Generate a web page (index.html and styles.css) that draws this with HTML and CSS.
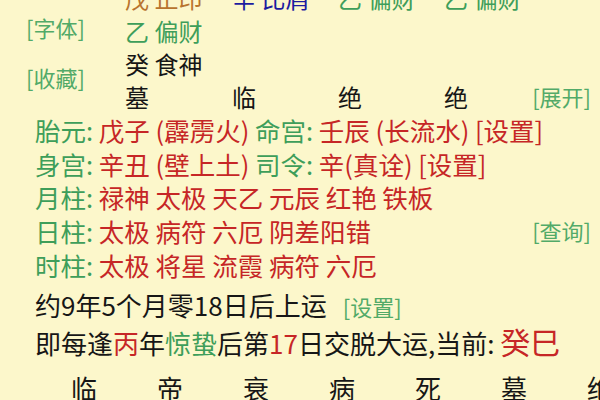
FILE: index.html
```html
<!DOCTYPE html>
<html lang="zh-CN">
<head>
<meta charset="UTF-8">
<meta name="viewport" content="width=device-width, initial-scale=1.0">
<title>排盘</title>
<link rel="stylesheet" href="styles.css">
</head>
<body>
<div class="page">
<div class="pillars">
<div class="cell first brown">戊 正印</div>
<div class="cell blue">辛 比肩</div>
<div class="cell green">乙 偏财</div>
<div class="cell green">乙 偏财</div>
<div class="side font-btn green">[字体]</div>
<div class="cell green">乙 偏财</div>
<div class="cell"></div>
<div class="cell"></div>
<div class="cell"></div>
<div class="side fav-btn green">[收藏]</div>
<div class="cell">癸 食神</div>
<div class="cell"></div>
<div class="cell"></div>
<div class="cell"></div>
<div class="cell">墓</div>
<div class="cell">临</div>
<div class="cell">绝</div>
<div class="cell last"><span>绝</span><span class="expand green">[展开]</span></div>
</div>
<div class="info">
<div class="line"><span class="green">胎元:</span> <span class="red">戊子 (霹雳火)</span> <span class="green">命宫:</span> <span class="red">壬辰 (长流水) [设置]</span></div>
<div class="line"><span class="green">身宫:</span> <span class="red">辛丑 (壁上土)</span> <span class="green">司令:</span> <span class="red">辛(真诠) [设置]</span></div>
<div class="line"><span class="green">月柱:</span> <span class="red">禄神 太极 天乙 元辰 红艳 铁板</span></div>
<div class="line split"><span><span class="green">日柱:</span> <span class="red">太极 病符 六厄 阴差阳错</span></span><span class="query green">[查询]</span></div>
<div class="line"><span class="green">时柱:</span> <span class="red">太极 将星 流霞 病符 六厄</span></div>
</div>
<div class="yun">
<div class="line">约9年5个月零18日后上运<span class="small green">[设置]</span></div>
<div class="line">即每逢<span class="red">丙</span>年<span class="green">惊蛰</span>后第<span class="red">17</span>日交脱大运,当前: <span class="big red">癸巳</span></div>
</div>
<div class="stages">
<span>临</span><span>帝</span><span>衰</span><span>病</span><span>死</span><span>墓</span><span>绝</span>
</div>
</div>
</body>
</html>
```

FILE: styles.css
```css
body {
    margin: 0;
    padding: 0;
    background-color: #fcf7cb;
    font-family: "Noto Sans CJK SC", "Noto Sans", sans-serif;
    color: #161616;
    overflow: hidden;
}
.page {
    width: 600px;
    height: 400px;
    overflow: hidden;
}
.green {
    color: #3e9e5a;
}
.red {
    color: #c62626;
}
.brown {
    color: #b8742e;
}
.blue {
    color: #1c1ca0;
}
.pillars {
    display: grid;
    grid-template-columns: 125px 107px 106px 106px 1fr;
    grid-auto-rows: 33px;
    margin-top: -19px;
    font-size: 24px;
    line-height: 33px;
    white-space: nowrap;
}
.pillars .first {
    grid-column: 2;
}
.side {
    grid-column: 1;
    padding-left: 26px;
    font-size: 22px;
    color: #52aa68;
}
.font-btn {
    margin-top: -3px;
}
.fav-btn {
    grid-row: span 2;
    align-self: center;
    margin-top: -6px;
}
.last {
    display: flex;
    justify-content: space-between;
    padding-right: 9px;
}
.expand {
    font-size: 22px;
    color: #52aa68;
}
.info {
    padding-left: 35px;
    padding-right: 9px;
    font-size: 25.5px;
    line-height: 33.7px;
    white-space: nowrap;
}
.split {
    display: flex;
    justify-content: space-between;
}
.query {
    font-size: 22px;
    color: #52aa68;
}
.yun {
    margin-top: 5px;
    padding-left: 35px;
    font-size: 26px;
    line-height: 35px;
    white-space: nowrap;
}
.small {
    font-size: 22px;
    margin-left: 16px;
    color: #52aa68;
}
.big {
    font-size: 30px;
}
.stages {
    display: grid;
    grid-template-columns: repeat(7, 86px);
    padding-left: 41px;
    margin-top: 13px;
    font-size: 26px;
    line-height: 30px;
}
.stages span {
    text-align: center;
}
```
